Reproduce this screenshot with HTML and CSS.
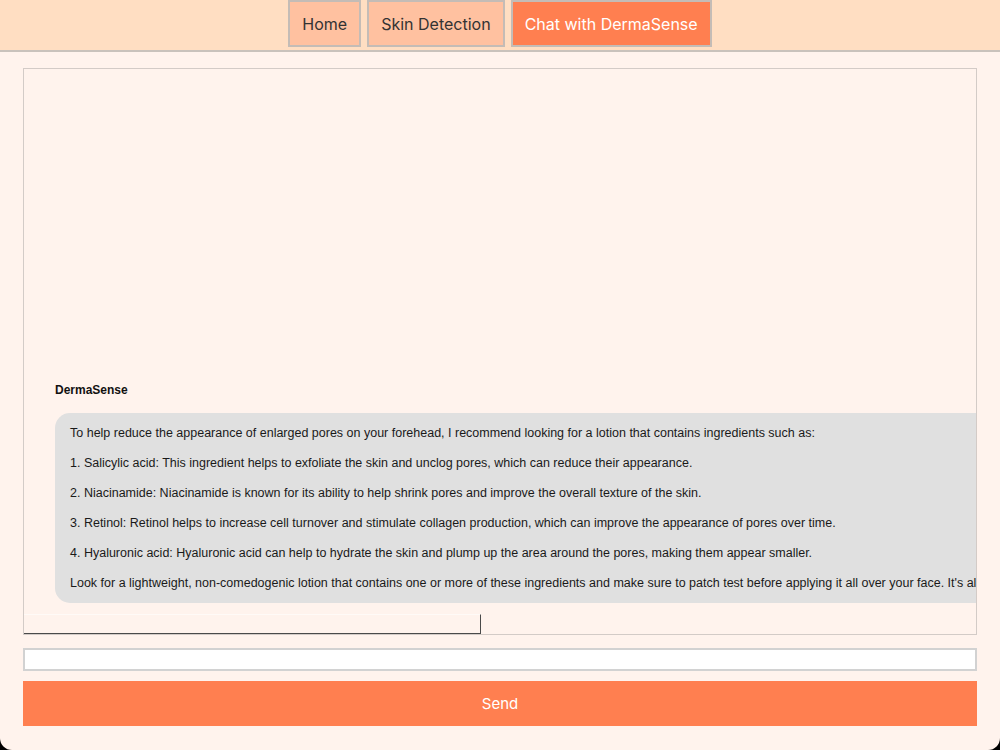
FILE: index.html
```html
<!DOCTYPE html>
<html lang="en">
<head>
    <meta charset="UTF-8">
    <meta name="viewport" content="width=device-width, initial-scale=1.0">
    <title>DermaSense Chat</title>
    <link rel="stylesheet" href="styles.css">
</head>
<body class="page">
    <nav class="top-nav">
        <button class="nav-button">Home</button>
        <button class="nav-button">Skin Detection</button>
        <button class="nav-button nav-button-active">Chat with DermaSense</button>
    </nav>

    <main class="chat-section">
        <div class="chat-box">
            <div class="message-list">
                <div class="message">
                    <div class="message-sender">DermaSense</div>
                    <div class="message-bubble">
                        <p>To help reduce the appearance of enlarged pores on your forehead, I recommend looking for a lotion that contains ingredients such as:</p>
                        <p>1. Salicylic acid: This ingredient helps to exfoliate the skin and unclog pores, which can reduce their appearance.</p>
                        <p>2. Niacinamide: Niacinamide is known for its ability to help shrink pores and improve the overall texture of the skin.</p>
                        <p>3. Retinol: Retinol helps to increase cell turnover and stimulate collagen production, which can improve the appearance of pores over time.</p>
                        <p>4. Hyaluronic acid: Hyaluronic acid can help to hydrate the skin and plump up the area around the pores, making them appear smaller.</p>
                        <p>Look for a lightweight, non-comedogenic lotion that contains one or more of these ingredients and make sure to patch test before applying it all over your face. It's always a good idea to consult with a dermatologist.</p>
                    </div>
                </div>
            </div>
            <div class="chat-footer-strip"></div>
        </div>

        <input type="text" class="chat-input">
        <button class="send-button">Send</button>
    </main>
</body>
</html>
```

FILE: styles.css
```css
html {
    background: #000;
}

.page {
    margin: 0;
    min-height: 100vh;
    background-color: #fff3ed;
    border-radius: 0 0 12px 12px;
    font-family: Inter, "Noto Sans", sans-serif;
}

/* Top navigation */
.top-nav {
    display: flex;
    justify-content: center;
    gap: 6px;
    height: 50px;
    background-color: #ffdec2;
    border-bottom: 2px solid #c9c2bc;
}

.nav-button {
    height: 47px;
    padding: 0 12px;
    font-family: Inter, "Noto Sans", sans-serif;
    font-size: 16px;
    color: #333;
    background-color: #ffc1a0;
    border: 2px solid #c4bcb6;
    cursor: pointer;
}

.nav-button-active {
    background-color: #ff7f50;
    color: #fff;
}

/* Chat area */
.chat-section {
    display: flex;
    flex-direction: column;
    padding: 16px 23px 0 23px;
}

.chat-box {
    display: flex;
    flex-direction: column;
    justify-content: flex-end;
    height: 565px;
    border: 1px solid #d3cbc7;
    overflow: hidden;
}

.message-list {
    padding: 0 0 11px 31px;
}

.message-sender {
    font-family: "Liberation Sans", Arial, sans-serif;
    font-size: 12px;
    font-weight: bold;
    color: #111;
    margin-bottom: 16px;
}

.message-bubble {
    width: 1100px;
    padding: 12px 15px;
    background-color: #e0e0e0;
    border-radius: 15px;
    font-family: "Liberation Sans", Arial, sans-serif;
    font-size: 12.5px;
    line-height: 16px;
    color: #1a1a1a;
}

.message-bubble p {
    margin: 0 0 14px 0;
    white-space: nowrap;
}

.message-bubble p:last-child {
    margin-bottom: 0;
}

.chat-footer-strip {
    width: 456px;
    height: 18px;
    border-top: 1px solid #fffaf7;
    border-right: 1px solid #4a4a4a;
    border-bottom: 1px solid #4a4a4a;
}

.chat-input {
    margin-top: 13px;
    height: 23px;
    box-sizing: border-box;
    border: 2px solid #d2d2d2;
    background: #fff;
}

.send-button {
    margin-top: 10px;
    height: 45px;
    background-color: #ff7f50;
    color: #fff;
    border: none;
    font-family: Inter, "Noto Sans", sans-serif;
    font-size: 15px;
    cursor: pointer;
}
```
